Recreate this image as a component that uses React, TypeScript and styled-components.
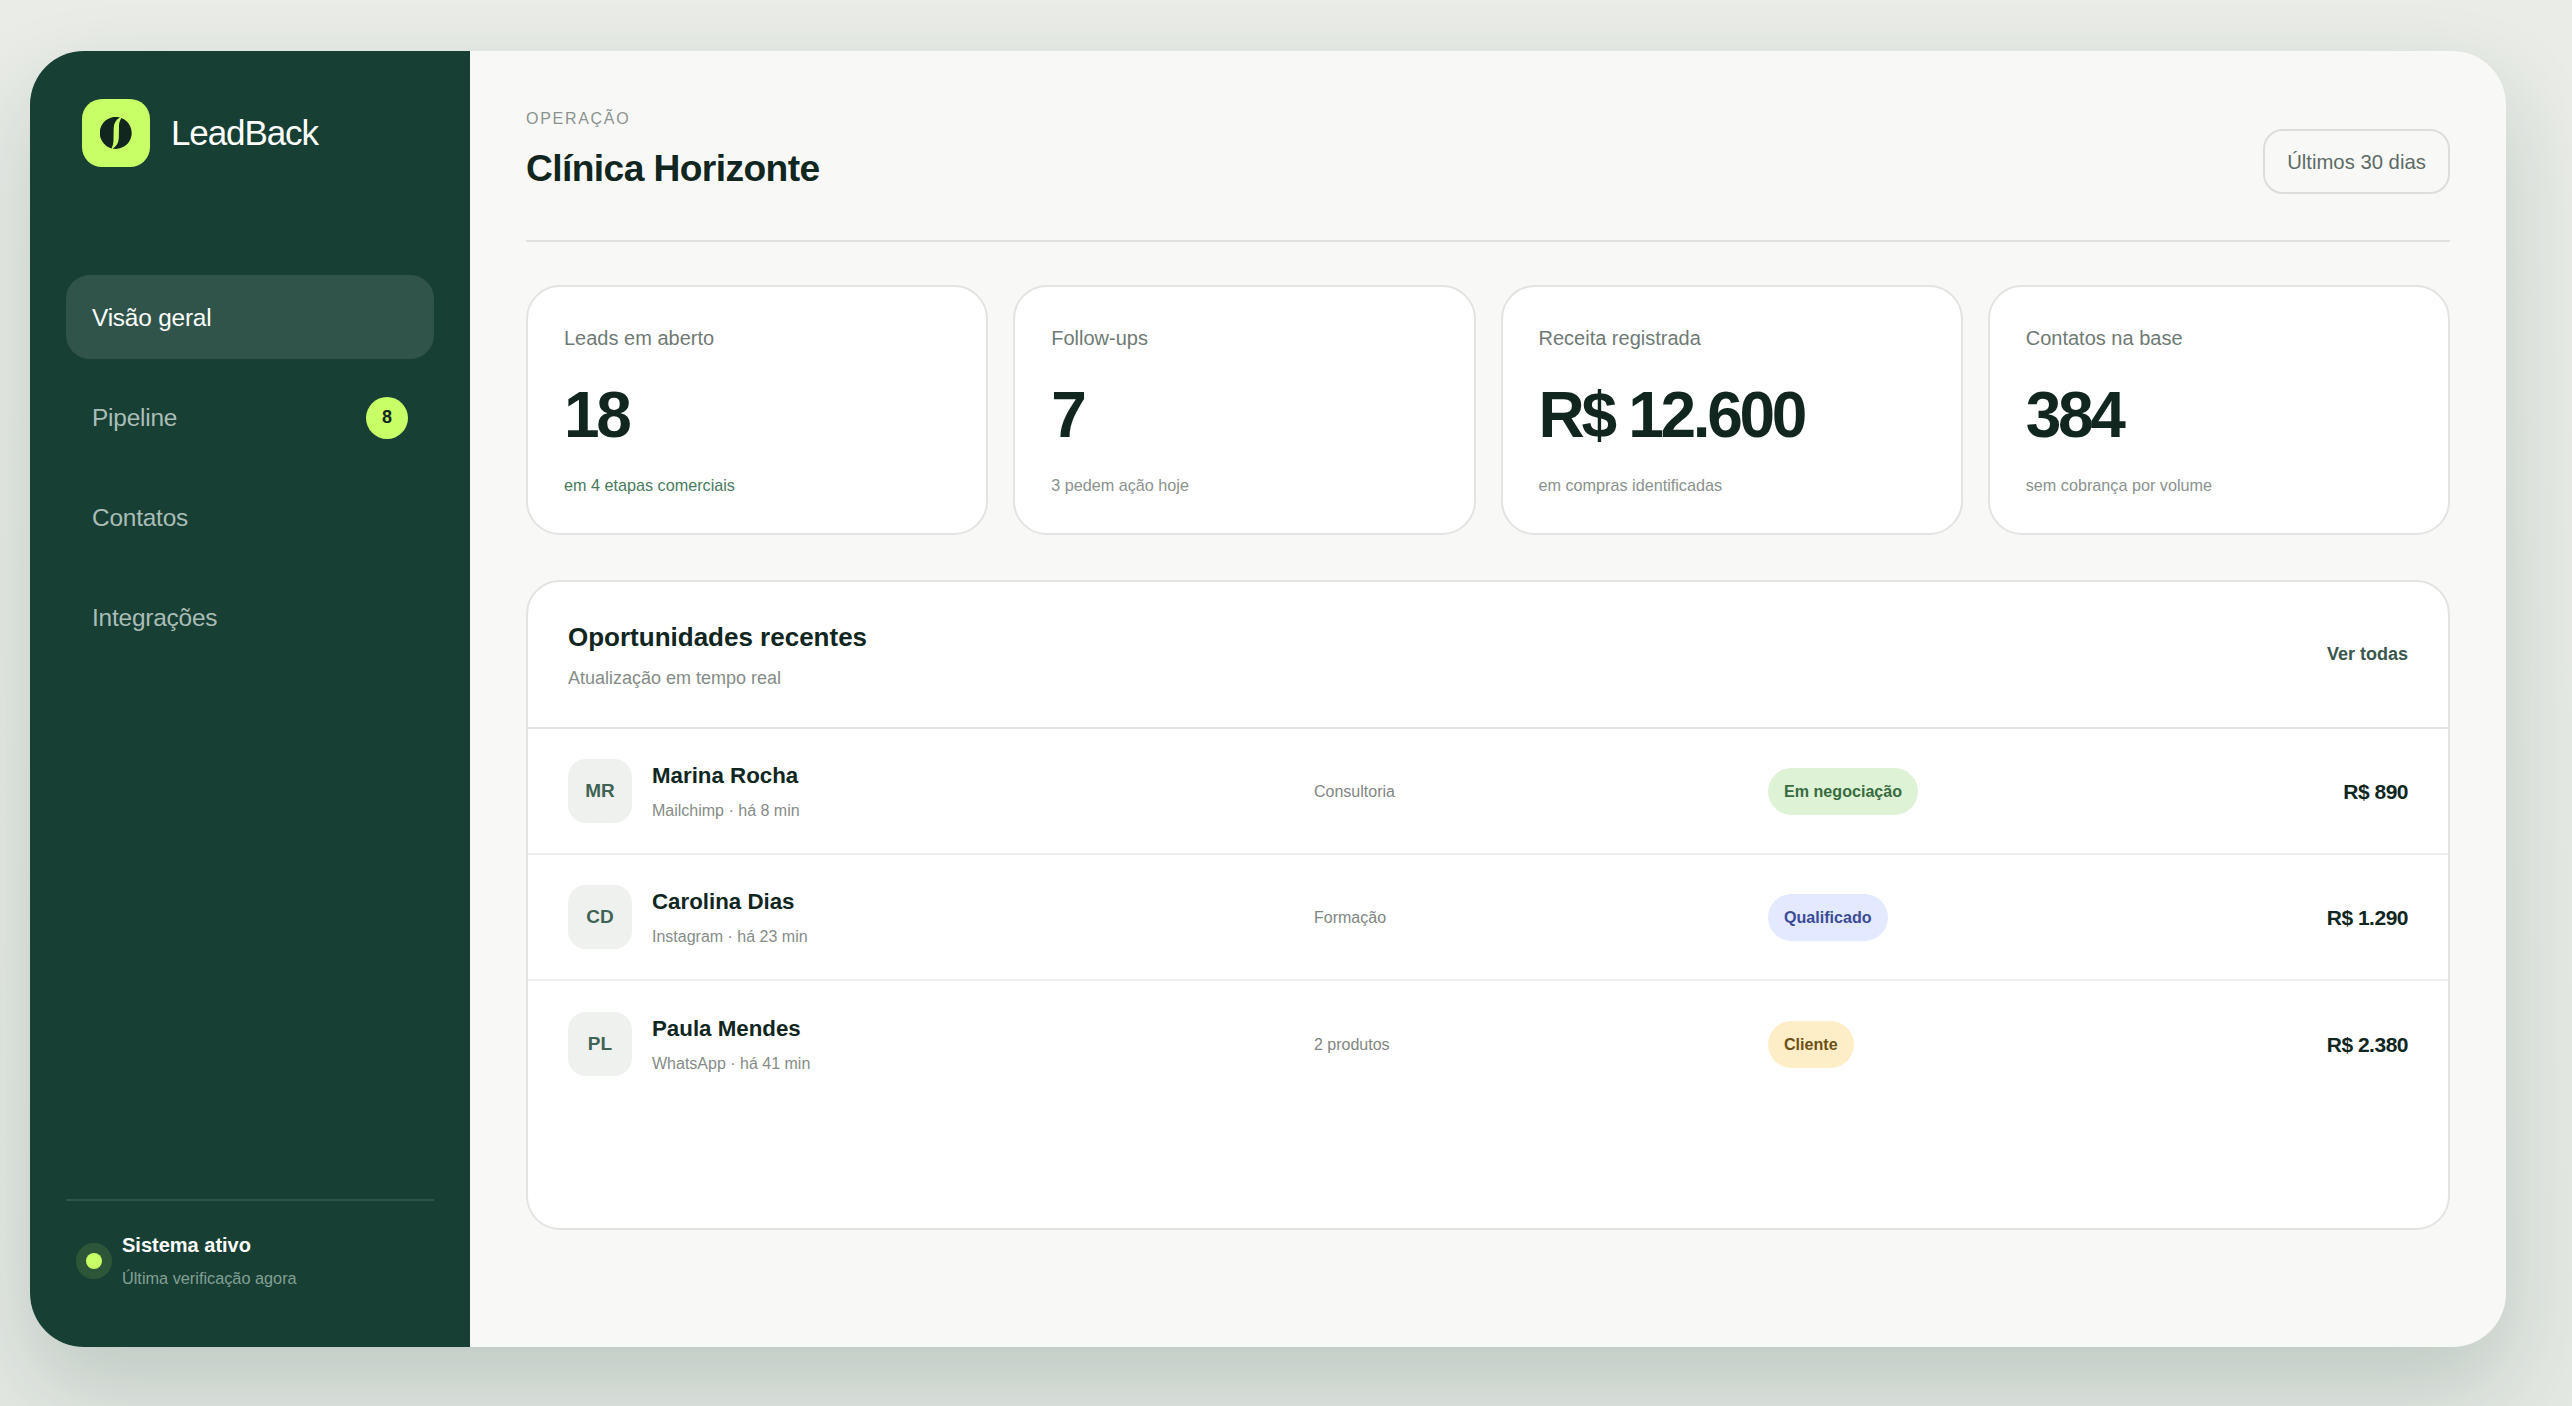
import React from 'react';
import styled, {createGlobalStyle} from "styled-components";

const GlobalStyle = createGlobalStyle`
    * {
        box-sizing: border-box;
    }
    html, body {
        margin: 0;
        padding: 0;
    }
    body {
        font-family: "Liberation Sans", Arial, sans-serif;
        background: #e4e8e3;
    }
`

const stats = [
    {label: 'Leads em aberto', value: '18', note: 'em 4 etapas comerciais', accent: true},
    {label: 'Follow-ups', value: '7', note: '3 pedem ação hoje', accent: false},
    {label: 'Receita registrada', value: 'R$ 12.600', note: 'em compras identificadas', accent: false},
    {label: 'Contatos na base', value: '384', note: 'sem cobrança por volume', accent: false},
];

const leads = [
    {initials: 'MR', name: 'Marina Rocha', origin: 'Mailchimp · há 8 min', product: 'Consultoria', status: 'Em negociação', tone: 'green', amount: 'R$ 890'},
    {initials: 'CD', name: 'Carolina Dias', origin: 'Instagram · há 23 min', product: 'Formação', status: 'Qualificado', tone: 'blue', amount: 'R$ 1.290'},
    {initials: 'PL', name: 'Paula Mendes', origin: 'WhatsApp · há 41 min', product: '2 produtos', status: 'Cliente', tone: 'amber', amount: 'R$ 2.380'},
] as const;

const tones = {
    green: {bg: '#def3d6', fg: '#386b3f'},
    blue: {bg: '#e3e9fe', fg: '#3c4c97'},
    amber: {bg: '#feeec8', fg: '#6e5014'},
};

const App = () => {
    return (
        <Page>
            <GlobalStyle/>
            <Frame>
                <Sidebar>
                    <Brand>
                        <LogoTile>
                            <svg width="32" height="32" viewBox="0 0 32 32">
                                <path fill="#10261f" d="M20 .5A16 16 0 0 0 11.5 31.4C13 28.5 13.4 26 13.5 23L13.7 11C13.9 6 16 2.5 20 .5z"/>
                                <path fill="#10261f" d="M12.5 31.6A16 16 0 0 0 21.2 .9C19.6 4 19.1 6 19 9L18.8 21C18.6 26 16.4 29.5 12.5 31.6z"/>
                            </svg>
                        </LogoTile>
                        <BrandName>LeadBack</BrandName>
                    </Brand>
                    <Nav>
                        <NavItem $active>Visão geral</NavItem>
                        <NavItem>Pipeline<NavBadge>8</NavBadge></NavItem>
                        <NavItem>Contatos</NavItem>
                        <NavItem>Integrações</NavItem>
                    </Nav>
                    <SystemStatus>
                        <StatusDot/>
                        <div>
                            <StatusTitle>Sistema ativo</StatusTitle>
                            <StatusNote>Última verificação agora</StatusNote>
                        </div>
                    </SystemStatus>
                </Sidebar>
                <Main>
                    <Header>
                        <div>
                            <Eyebrow>OPERAÇÃO</Eyebrow>
                            <Title>Clínica Horizonte</Title>
                        </div>
                        <RangeButton>Últimos 30 dias</RangeButton>
                    </Header>
                    <StatsGrid>
                        {stats.map(stat => (
                            <StatCard key={stat.label}>
                                <StatLabel>{stat.label}</StatLabel>
                                <StatValue>{stat.value}</StatValue>
                                <StatNote $accent={stat.accent}>{stat.note}</StatNote>
                            </StatCard>
                        ))}
                    </StatsGrid>
                    <Panel>
                        <PanelHeader>
                            <div>
                                <PanelTitle>Oportunidades recentes</PanelTitle>
                                <PanelNote>Atualização em tempo real</PanelNote>
                            </div>
                            <SeeAll>Ver todas</SeeAll>
                        </PanelHeader>
                        {leads.map(lead => (
                            <LeadRow key={lead.name}>
                                <Person>
                                    <Avatar>{lead.initials}</Avatar>
                                    <div>
                                        <LeadName>{lead.name}</LeadName>
                                        <LeadOrigin>{lead.origin}</LeadOrigin>
                                    </div>
                                </Person>
                                <Product>{lead.product}</Product>
                                <div>
                                    <StatusBadge $tone={lead.tone}>{lead.status}</StatusBadge>
                                </div>
                                <Amount>{lead.amount}</Amount>
                            </LeadRow>
                        ))}
                    </Panel>
                </Main>
            </Frame>
        </Page>
    );
};

export default App;

const Page = styled.div`
    height: 1406px;
    padding: 51px 66px 59px 30px;
    overflow: hidden;
    background: linear-gradient(180deg, #e9ece7 0%, #e4e8e3 100%);
`
const Frame = styled.div`
    display: grid;
    grid-template-columns: 440px 1fr;
    height: 1296px;
    border-radius: 54px;
    overflow: hidden;
    background: #f8f9f6;
    box-shadow: 0 40px 90px rgba(24, 63, 52, 0.18);
`
const Sidebar = styled.aside`
    display: flex;
    flex-direction: column;
    padding: 48px 36px 59px;
    background: #183f34;
`
const Brand = styled.div`
    display: flex;
    align-items: center;
    gap: 21px;
    padding-left: 16px;
`
const LogoTile = styled.div`
    display: flex;
    align-items: center;
    justify-content: center;
    width: 68px;
    height: 68px;
    border-radius: 20px;
    background: #c8ff66;
`
const BrandName = styled.span`
    font-size: 35px;
    letter-spacing: -1.1px;
    color: #ffffff;
`
const Nav = styled.nav`
    display: flex;
    flex: 1;
    flex-direction: column;
    gap: 16px;
    margin-top: 108px;
`
const NavItem = styled.div<{ $active?: boolean }>`
    display: flex;
    align-items: center;
    justify-content: space-between;
    height: 84px;
    padding: 1px 26px 0;
    border-radius: 24px;
    font-size: 24.4px;
    letter-spacing: -0.2px;
    color: ${props => props.$active ? '#ffffff' : '#a9bdb6'};
    background: ${props => props.$active ? '#31544a' : 'transparent'};
`
const NavBadge = styled.span`
    display: flex;
    align-items: center;
    justify-content: center;
    width: 42px;
    height: 42px;
    border-radius: 50%;
    font-size: 18px;
    font-weight: 700;
    color: #10261f;
    background: #c8ff66;
`
const SystemStatus = styled.div`
    display: flex;
    align-items: center;
    gap: 22px;
    padding: 33px 0 0 22px;
    border-top: 2px solid #2f5449;
`
const StatusDot = styled.span`
    width: 16px;
    height: 16px;
    margin: 0 -2px;
    border-radius: 50%;
    background: #c8ff66;
    box-shadow: 0 0 0 10px rgba(200, 255, 102, 0.12);
`
const StatusTitle = styled.div`
    font-size: 20px;
    font-weight: 700;
    color: #ffffff;
`
const StatusNote = styled.div`
    margin-top: 12px;
    font-size: 16.3px;
    color: #83a095;
`
const Main = styled.main`
    display: flex;
    flex-direction: column;
    padding: 0 56px;
`
const Header = styled.header`
    display: flex;
    align-items: flex-start;
    justify-content: space-between;
    height: 191px;
    padding-top: 59px;
    border-bottom: 2px solid #dfe1de;
`
const Eyebrow = styled.div`
    font-size: 16px;
    letter-spacing: 1.7px;
    color: #8c938f;
`
const Title = styled.h1`
    margin: 19px 0 0;
    font-size: 37.2px;
    font-weight: 700;
    letter-spacing: -0.6px;
    color: #10261f;
`
const RangeButton = styled.div`
    display: flex;
    align-items: center;
    justify-content: center;
    width: 187px;
    height: 65px;
    margin-top: 19px;
    padding-top: 1px;
    border: 2px solid #dcdedb;
    border-radius: 20px;
    font-size: 20.3px;
    color: #5d6a65;
`
const StatsGrid = styled.section`
    display: grid;
    grid-template-columns: repeat(4, 1fr);
    gap: 25px;
    margin-top: 43px;
`
const StatCard = styled.article`
    display: flex;
    flex-direction: column;
    height: 250px;
    padding: 40px 36px 0;
    border: 2px solid #e3e4e2;
    border-radius: 34px;
    background: #ffffff;
`
const StatLabel = styled.div`
    font-size: 20px;
    color: #6f7a75;
`
const StatValue = styled.div`
    margin-top: 29px;
    font-size: 64px;
    line-height: 72px;
    font-weight: 700;
    letter-spacing: -3.3px;
    color: #10261f;
`
const StatNote = styled.div<{ $accent: boolean }>`
    margin-top: 25px;
    font-size: 16.2px;
    color: ${props => props.$accent ? '#4a7a5e' : '#8a928e'};
`
const Panel = styled.section`
    height: 650px;
    margin-top: 45px;
    border: 2px solid #e3e4e2;
    border-radius: 34px;
    background: #ffffff;
`
const PanelHeader = styled.div`
    display: flex;
    align-items: center;
    justify-content: space-between;
    height: 147px;
    padding: 0 40px;
    border-bottom: 2px solid #e3e4e2;
`
const PanelTitle = styled.h2`
    margin: 0;
    padding-top: 2px;
    font-size: 26px;
    font-weight: 700;
    color: #10261f;
`
const PanelNote = styled.div`
    margin-top: 15px;
    font-size: 18px;
    color: #858c88;
`
const SeeAll = styled.div`
    font-size: 18px;
    font-weight: 700;
    color: #3b574d;
`
const LeadRow = styled.div`
    display: grid;
    grid-template-columns: 746px 454px 1fr auto;
    align-items: center;
    height: 126px;
    padding: 0 40px;
    border-bottom: 2px solid #eeefed;

    &:last-child {
        border-bottom: none;
    }
`
const Person = styled.div`
    display: flex;
    align-items: center;
    gap: 20px;
`
const Avatar = styled.div`
    display: flex;
    align-items: center;
    justify-content: center;
    width: 64px;
    height: 64px;
    border-radius: 18px;
    font-size: 19px;
    font-weight: 700;
    color: #3f6455;
    background: #eff1ee;
`
const LeadName = styled.div`
    font-size: 22.3px;
    font-weight: 700;
    color: #10261f;
`
const LeadOrigin = styled.div`
    margin-top: 13px;
    font-size: 16px;
    color: #858c88;
`
const Product = styled.div`
    padding-top: 2px;
    font-size: 16px;
    color: #7f8783;
`
const StatusBadge = styled.span<{ $tone: keyof typeof tones }>`
    display: inline-flex;
    align-items: center;
    height: 47px;
    padding: 1px 16px 0;
    border-radius: 24px;
    font-size: 16.1px;
    font-weight: 700;
    color: ${props => tones[props.$tone].fg};
    background: ${props => tones[props.$tone].bg};
`
const Amount = styled.div`
    padding-top: 2px;
    font-size: 21px;
    font-weight: 700;
    letter-spacing: -0.5px;
    color: #10261f;
`
